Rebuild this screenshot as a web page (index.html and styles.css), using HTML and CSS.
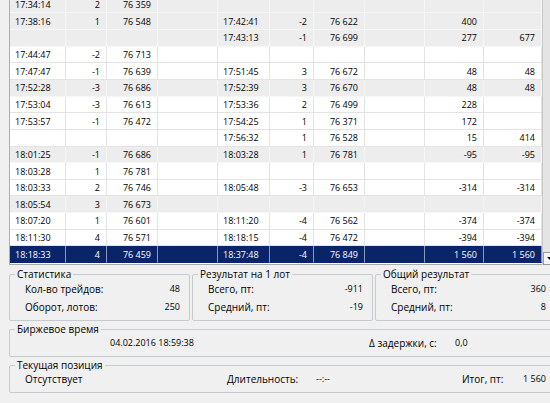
FILE: index.html
```html
<!DOCTYPE html>
<html lang="ru">
<head>
<meta charset="utf-8">
<title>Сделки</title>
<link rel="stylesheet" href="styles.css">
</head>
<body>
<div class="window">
  <div class="grid-area">
    <div class="table-wrap">
      <table class="trades">
        <colgroup>
          <col class="c-time1"><col class="c-q1"><col class="c-p1"><col class="c-e1">
          <col class="c-time2"><col class="c-q2"><col class="c-p2"><col class="c-e2">
          <col class="c-res"><col class="c-cum">
        </colgroup>
        <tbody>
          <tr class="alt"><td>17:34:14</td><td class="n">2</td><td class="n">76 359</td><td></td><td></td><td class="n"></td><td class="n"></td><td></td><td class="n"></td><td class="n"></td></tr>
          <tr class="alt"><td>17:38:16</td><td class="n">1</td><td class="n">76 548</td><td></td><td>17:42:41</td><td class="n">-2</td><td class="n">76 622</td><td></td><td class="n">400</td><td class="n"></td></tr>
          <tr class="alt"><td></td><td class="n"></td><td class="n"></td><td></td><td>17:43:13</td><td class="n">-1</td><td class="n">76 699</td><td></td><td class="n">277</td><td class="n">677</td></tr>
          <tr><td>17:44:47</td><td class="n">-2</td><td class="n">76 713</td><td></td><td></td><td class="n"></td><td class="n"></td><td></td><td class="n"></td><td class="n"></td></tr>
          <tr><td>17:47:47</td><td class="n">-1</td><td class="n">76 639</td><td></td><td>17:51:45</td><td class="n">3</td><td class="n">76 672</td><td></td><td class="n">48</td><td class="n">48</td></tr>
          <tr class="alt"><td>17:52:28</td><td class="n">-3</td><td class="n">76 686</td><td></td><td>17:52:39</td><td class="n">3</td><td class="n">76 670</td><td></td><td class="n">48</td><td class="n">48</td></tr>
          <tr><td>17:53:04</td><td class="n">-3</td><td class="n">76 613</td><td></td><td>17:53:36</td><td class="n">2</td><td class="n">76 499</td><td></td><td class="n">228</td><td class="n"></td></tr>
          <tr><td>17:53:57</td><td class="n">-1</td><td class="n">76 472</td><td></td><td>17:54:25</td><td class="n">1</td><td class="n">76 371</td><td></td><td class="n">172</td><td class="n"></td></tr>
          <tr><td></td><td class="n"></td><td class="n"></td><td></td><td>17:56:32</td><td class="n">1</td><td class="n">76 528</td><td></td><td class="n">15</td><td class="n">414</td></tr>
          <tr class="alt"><td>18:01:25</td><td class="n">-1</td><td class="n">76 686</td><td></td><td>18:03:28</td><td class="n">1</td><td class="n">76 781</td><td></td><td class="n">-95</td><td class="n">-95</td></tr>
          <tr><td>18:03:28</td><td class="n">1</td><td class="n">76 781</td><td></td><td></td><td class="n"></td><td class="n"></td><td></td><td class="n"></td><td class="n"></td></tr>
          <tr><td>18:03:33</td><td class="n">2</td><td class="n">76 746</td><td></td><td>18:05:48</td><td class="n">-3</td><td class="n">76 653</td><td></td><td class="n">-314</td><td class="n">-314</td></tr>
          <tr class="alt"><td>18:05:54</td><td class="n">3</td><td class="n">76 673</td><td></td><td></td><td class="n"></td><td class="n"></td><td></td><td class="n"></td><td class="n"></td></tr>
          <tr><td>18:07:20</td><td class="n">1</td><td class="n">76 601</td><td></td><td>18:11:20</td><td class="n">-4</td><td class="n">76 562</td><td></td><td class="n">-374</td><td class="n">-374</td></tr>
          <tr><td>18:11:30</td><td class="n">4</td><td class="n">76 571</td><td></td><td>18:18:15</td><td class="n">-4</td><td class="n">76 472</td><td></td><td class="n">-394</td><td class="n">-394</td></tr>
          <tr class="sel"><td>18:18:33</td><td class="n">4</td><td class="n">76 459</td><td></td><td>18:37:48</td><td class="n">-4</td><td class="n">76 849</td><td></td><td class="n">1 560</td><td class="n">1 560</td></tr>
        </tbody>
      </table>
    </div>
    <div class="scrollbar">
      <div class="track"></div>
      <div class="arrow-btn"><span class="arrow"></span></div>
    </div>
  </div>

  <div class="panels">
    <div class="top-boxes">
      <fieldset class="box">
        <legend>Статистика</legend>
        <div class="pairs">
          <span>Кол-во трейдов:</span><span class="v">48</span>
          <span>Оборот, лотов:</span><span class="v">250</span>
        </div>
      </fieldset>
      <fieldset class="box">
        <legend>Результат на 1 лот</legend>
        <div class="pairs">
          <span>Всего, пт:</span><span class="v">-911</span>
          <span>Средний, пт:</span><span class="v">-19</span>
        </div>
      </fieldset>
      <fieldset class="box">
        <legend>Общий результат</legend>
        <div class="pairs">
          <span>Всего, пт:</span><span class="v">360</span>
          <span>Средний, пт:</span><span class="v">8</span>
        </div>
      </fieldset>
    </div>

    <fieldset class="box wide">
      <legend>Биржевое время</legend>
      <div class="line time-line">
        <span class="date num">04.02.2016 18:59:38</span>
        <span>Δ задержки, с:</span>
        <span class="num">0,0</span>
      </div>
    </fieldset>

    <fieldset class="box wide">
      <legend>Текущая позиция</legend>
      <div class="line pos-line">
        <span>Отсутствует</span>
        <span>Длительность:</span>
        <span class="num">--:--</span>
        <span>Итог, пт:</span>
        <span class="v">1 560</span>
      </div>
    </fieldset>
  </div>
</div>
</body>
</html>
```

FILE: styles.css
```css
html, body {
  margin: 0;
  padding: 0;
  overflow: hidden;
}

body {
  background: #f0f0f0;
  font-family: "Open Sans", "Noto Sans", sans-serif;
  font-size: 10px;
  color: #000;
}

.window {
  width: 547px;
  margin-left: 9px;
}

/* ---------- table area ---------- */
.grid-area {
  display: flex;
  height: 265px;
}

.table-wrap {
  flex: 1;
  overflow: hidden;
  background: #fff;
  border-left: 1px solid #9fb1c6;
  border-bottom: 1px solid #a8a8a8;
}

.trades {
  table-layout: fixed;
  width: 532px;
  border-collapse: separate;
  border-spacing: 0;
  margin-top: -3.4px;
  font-size: 9px;
}

.c-time1 { width: 56px; }
.c-q1 { width: 41px; }
.c-p1 { width: 51px; }
.c-e1 { width: 60px; }
.c-time2 { width: 52px; }
.c-q2 { width: 44px; }
.c-p2 { width: 51px; }
.c-e2 { width: 60px; }
.c-res { width: 59px; }
.c-cum { width: 58px; }

.trades tr {
  height: 16.67px;
}

.trades td {
  box-sizing: border-box;
  padding: 1px 5px 0;
  line-height: 12px;
  white-space: nowrap;
  overflow: hidden;
  border-right: 1px solid #e3e3e3;
  border-bottom: 1px solid #e3e3e3;
}

.trades td.n {
  text-align: right;
  padding-right: 6px;
}

.trades tr.alt td {
  background: #ededed;
  border-color: #f6f6f6;
}

.trades tr.sel td {
  background: #0a246a;
  color: #fff;
  border-right-color: #8c98b8;
  border-bottom-color: #0a246a;
}

/* ---------- scrollbar ---------- */
.scrollbar {
  width: 14px;
  display: flex;
  flex-direction: column;
  border-left: 1px solid #c8c8c8;
  box-sizing: border-box;
}

.track {
  flex: 1;
  background: #e4e4e4;
}

.arrow-btn {
  height: 13px;
  background: #f4f4f4;
  border: 1px solid #9a9a9a;
  box-sizing: border-box;
  display: flex;
  align-items: center;
  justify-content: center;
}

.arrow {
  width: 0;
  height: 0;
  border-left: 3px solid transparent;
  border-right: 3px solid transparent;
  border-top: 3px solid #000;
}

/* ---------- panels ---------- */
.panels {
  padding-top: 3px;
  display: flex;
  flex-direction: column;
  gap: 2px;
}

.top-boxes {
  display: grid;
  grid-template-columns: repeat(3, 1fr);
  gap: 2px;
}

.box {
  margin: 0;
  min-width: 0;
  padding: 0 0 4px 5px;
  border: 1px solid #c6cbd0;
  border-radius: 2px;
}

.box legend {
  padding: 0 2px;
  line-height: 12px;
}

.pairs {
  display: grid;
  grid-template-columns: 1fr auto;
  line-height: 18px;
  padding: 0 9px 0 10px;
}

.v,
.num {
  font-size: 9px;
}

.v {
  text-align: right;
}

.wide {
  padding-bottom: 5px;
}

.line {
  display: grid;
  line-height: 16px;
  padding: 0 9px 0 10px;
}

.time-line {
  grid-template-columns: 85px 259px 86px 1fr;
}

.time-line .date {
  grid-column: 2;
}

.pos-line {
  grid-template-columns: 202px 89px 146px auto 1fr;
}
```
